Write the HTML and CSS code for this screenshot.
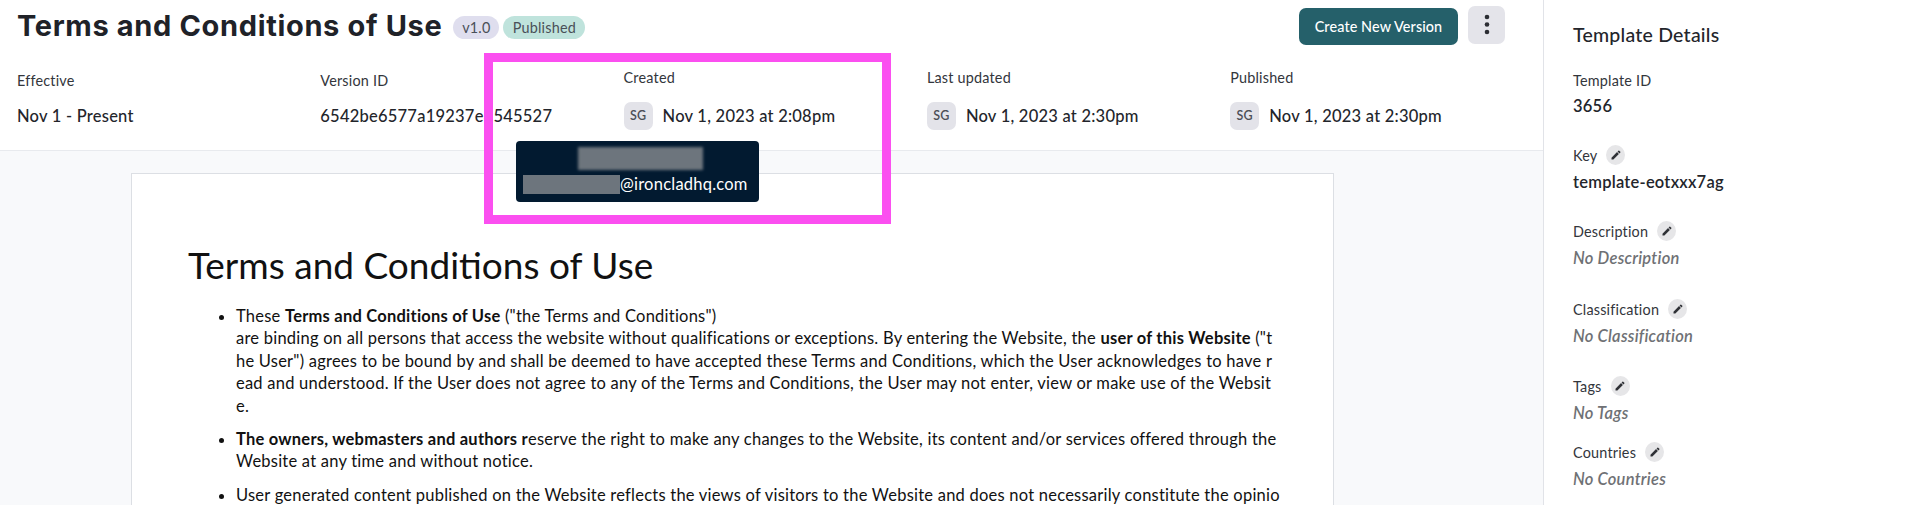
FILE: index.html
```html
<!DOCTYPE html>
<html lang="en">
<head>
    <meta charset="UTF-8">
    <meta name="viewport" content="width=device-width, initial-scale=1.0">
    <title>Terms and Conditions of Use</title>
    <link rel="stylesheet" href="styles.css">
</head>
<body>
    <div class="layout">
        <main class="main">
            <header class="header">
                <div class="title-row">
                    <h1 class="title">Terms and Conditions of Use</h1>
                    <span class="badge badge-version">v1.0</span>
                    <span class="badge badge-status">Published</span>
                    <div class="actions">
                        <button class="primary-button">Create New Version</button>
                        <button class="more-button" aria-label="More">
                            <svg width="6" height="22" viewBox="0 0 6 22"><circle cx="3" cy="3" r="2.3"/><circle cx="3" cy="10.5" r="2.3"/><circle cx="3" cy="18" r="2.3"/></svg>
                        </button>
                    </div>
                </div>
                <div class="meta">
                    <div class="meta-item">
                        <span class="meta-label">Effective</span>
                        <span class="meta-value">Nov 1 - Present</span>
                    </div>
                    <div class="meta-item">
                        <span class="meta-label">Version ID</span>
                        <span class="meta-value">6542be6577a19237e8545527</span>
                    </div>
                    <div class="meta-item">
                        <span class="meta-label">Created</span>
                        <span class="meta-value"><span class="avatar">SG</span>Nov 1, 2023 at 2:08pm</span>
                    </div>
                    <div class="meta-item">
                        <span class="meta-label">Last updated</span>
                        <span class="meta-value"><span class="avatar">SG</span>Nov 1, 2023 at 2:30pm</span>
                    </div>
                    <div class="meta-item">
                        <span class="meta-label">Published</span>
                        <span class="meta-value"><span class="avatar">SG</span>Nov 1, 2023 at 2:30pm</span>
                    </div>
                </div>
            </header>

            <section class="canvas">
                <article class="paper">
                    <h2 class="paper-title">Terms and Conditions of Use</h2>
                    <ul class="paper-list">
                        <li>These <b>Terms and Conditions of Use</b> ("the Terms and Conditions")<br>are binding on all persons that access the website without qualifications or exceptions. By entering the Website, the <b>user of this Website</b> ("t<br>he User") agrees to be bound by and shall be deemed to have accepted these Terms and Conditions, which the User acknowledges to have r<br>ead and understood. If the User does not agree to any of the Terms and Conditions, the User may not enter, view or make use of the Websit<br>e.</li>
                        <li><b>The owners, webmasters and authors r</b>eserve the right to make any changes to the Website, its content and/or services offered through the<br>Website at any time and without notice.</li>
                        <li>User generated content published on the Website reflects the views of visitors to the Website and does not necessarily constitute the opinio</li>
                    </ul>
                </article>
            </section>

            <div class="tooltip">
                <span class="redact redact-name"></span>
                <span class="tooltip-mail"><span class="redact redact-mail"></span>@ironcladhq.com</span>
            </div>
            <div class="highlight"></div>
        </main>

        <aside class="details">
            <h3 class="details-title">Template Details</h3>
            <div class="field field-id">
                <div class="field-label">Template ID</div>
                <div class="field-value">3656</div>
            </div>
            <div class="field field-key">
                <div class="field-label">Key <span class="edit"><svg viewBox="0 0 24 24"><path d="M3 17.25V21h3.75L17.81 9.94l-3.75-3.75L3 17.25zM20.71 7.04c.39-.39.39-1.02 0-1.41l-2.34-2.34c-.39-.39-1.02-.39-1.41 0l-1.83 1.83 3.75 3.75 1.83-1.83z"/></svg></span></div>
                <div class="field-value">template-eotxxx7ag</div>
            </div>
            <div class="field field-desc">
                <div class="field-label">Description <span class="edit"><svg viewBox="0 0 24 24"><path d="M3 17.25V21h3.75L17.81 9.94l-3.75-3.75L3 17.25zM20.71 7.04c.39-.39.39-1.02 0-1.41l-2.34-2.34c-.39-.39-1.02-.39-1.41 0l-1.83 1.83 3.75 3.75 1.83-1.83z"/></svg></span></div>
                <div class="field-value field-empty">No Description</div>
            </div>
            <div class="field field-class">
                <div class="field-label">Classification <span class="edit"><svg viewBox="0 0 24 24"><path d="M3 17.25V21h3.75L17.81 9.94l-3.75-3.75L3 17.25zM20.71 7.04c.39-.39.39-1.02 0-1.41l-2.34-2.34c-.39-.39-1.02-.39-1.41 0l-1.83 1.83 3.75 3.75 1.83-1.83z"/></svg></span></div>
                <div class="field-value field-empty">No Classification</div>
            </div>
            <div class="field field-tags">
                <div class="field-label">Tags <span class="edit"><svg viewBox="0 0 24 24"><path d="M3 17.25V21h3.75L17.81 9.94l-3.75-3.75L3 17.25zM20.71 7.04c.39-.39.39-1.02 0-1.41l-2.34-2.34c-.39-.39-1.02-.39-1.41 0l-1.83 1.83 3.75 3.75 1.83-1.83z"/></svg></span></div>
                <div class="field-value field-empty">No Tags</div>
            </div>
            <div class="field">
                <div class="field-label">Countries <span class="edit"><svg viewBox="0 0 24 24"><path d="M3 17.25V21h3.75L17.81 9.94l-3.75-3.75L3 17.25zM20.71 7.04c.39-.39.39-1.02 0-1.41l-2.34-2.34c-.39-.39-1.02-.39-1.41 0l-1.83 1.83 3.75 3.75 1.83-1.83z"/></svg></span></div>
                <div class="field-value field-empty">No Countries</div>
            </div>
        </aside>
    </div>
</body>
</html>
```

FILE: styles.css
```css
* {
  box-sizing: border-box;
}
html,
body {
  margin: 0;
  height: 505px;
  overflow: hidden;
}
body {
  font-family: "Lato", "Open Sans", sans-serif;
  font-size: 16.5px;
  letter-spacing: 0.23px;
  color: #23252b;
  background: #fff;
}
.layout {
  display: flex;
  height: 505px;
}

/* main column */
.main {
  position: relative;
  width: 1544px;
  flex-shrink: 0;
  display: flex;
  flex-direction: column;
  border-right: 1px solid #e1e3e8;
}
.header {
  height: 151px;
  flex-shrink: 0;
  padding: 6px 38px 0 17px;
  border-bottom: 1px solid #e8eaee;
}
.title-row {
  display: flex;
  align-items: center;
  height: 40px;
}
.title {
  margin: 0 11px 0 0;
  font-family: "Inter", sans-serif;
  font-size: 29px;
  letter-spacing: 0.65px;
  line-height: 40px;
  font-weight: 700;
  color: #202228;
}
.badge {
  display: flex;
  align-items: center;
  justify-content: center;
  height: 23px;
  margin: 3px 4px 0 0;
  border-radius: 12px;
  font-size: 14.4px;
  letter-spacing: 0.2px;
  color: #4a5058;
}
.badge-version {
  width: 46px;
  background: #dfdeee;
}
.badge-status {
  width: 82px;
  background: #bfe3dc;
}
.actions {
  display: flex;
  align-items: flex-start;
  gap: 10px;
  margin-left: auto;
  align-self: flex-start;
}
.primary-button {
  width: 159px;
  height: 37px;
  margin-top: 2px;
  padding: 0;
  border: none;
  border-radius: 7px;
  background: #25606a;
  color: #fff;
  font-family: inherit;
  font-size: 14.4px;
  letter-spacing: 0.1px;
  font-weight: 500;
}
.more-button {
  display: flex;
  align-items: center;
  justify-content: center;
  width: 37px;
  height: 38px;
  padding: 0;
  border: none;
  border-radius: 7px;
  background: #e4e4ea;
}
.more-button svg {
  fill: #2b2d33;
}
.meta {
  display: grid;
  grid-template-columns: repeat(5, 303.3px);
  align-items: center;
  margin-top: 22px;
}
.meta-item {
  display: flex;
  flex-direction: column;
  gap: 14px;
}
.meta-label {
  font-size: 14.4px;
  letter-spacing: 0.2px;
  line-height: 20px;
  color: #33363c;
}
.meta-value {
  display: flex;
  align-items: center;
  line-height: 22px;
  font-weight: 500;
}
.avatar {
  display: flex;
  align-items: center;
  justify-content: center;
  width: 29px;
  height: 28px;
  margin-right: 10px;
  border-radius: 7px;
  background: #e3e3e9;
  color: #4c4f56;
  font-size: 12.5px;
  font-weight: 600;
}

/* document area */
.canvas {
  flex: 1;
  min-height: 0;
  overflow: hidden;
  padding: 22px 0 0 131px;
  background: #f8f9fb;
}
.paper {
  width: 1203px;
  height: 400px;
  padding: 68px 56px 0;
  background: #fff;
  border: 1px solid #dcdfe4;
  color: #111;
}
.paper-title {
  margin: 0 0 17px;
  font-size: 37px;
  letter-spacing: 0;
  line-height: 46px;
  font-weight: 400;
}
.paper-list {
  margin: 0;
  padding: 0 0 0 48px;
  line-height: 22.4px;
  white-space: nowrap;
}
.paper-list li {
  margin-bottom: 11px;
}

/* tooltip + annotation, these sit over everything */
.tooltip {
  position: absolute;
  left: 516px;
  top: 141px;
  width: 243px;
  height: 61px;
  padding-top: 6px;
  border-radius: 4px;
  background: #021a30;
  color: #fff;
}
.redact {
  display: block;
  background: #6d757d;
}
.redact-name {
  width: 125px;
  height: 23px;
  margin-left: 62px;
  filter: blur(1.5px);
}
.redact-mail {
  width: 97px;
  height: 19px;
}
.tooltip-mail {
  display: flex;
  align-items: center;
  margin: 5px 0 0 7px;
  line-height: 19px;
}
.highlight {
  position: absolute;
  left: 484px;
  top: 53px;
  width: 407px;
  height: 171px;
  border: 9px solid #fb4ff0;
}

/* right panel */
.details {
  flex: 1;
  padding: 23px 0 0 29px;
  background: #fff;
}
.details-title {
  margin: 0 0 23px;
  font-size: 19.5px;
  line-height: 24px;
  font-weight: 500;
}
.field {
  height: 76px;
}
.field-id {
  height: 75px;
}
.field-desc {
  height: 78px;
}
.field-class {
  height: 77px;
}
.field-tags {
  height: 66px;
}
.field-label {
  display: flex;
  align-items: center;
  gap: 9px;
  height: 20px;
  font-size: 14.4px;
  letter-spacing: 0.2px;
  color: #33363c;
}
.field-value {
  margin-top: 6px;
  line-height: 22px;
  font-weight: 600;
}
.field-id .field-value {
  margin-top: 5px;
}
.field-empty {
  font-style: italic;
  color: #6f7175;
}
.edit {
  display: flex;
  align-items: center;
  justify-content: center;
  width: 19px;
  height: 20px;
  border-radius: 50%;
  background: #e6e6e8;
}
.edit svg {
  width: 12px;
  height: 12px;
  fill: #2f3136;
}
```
